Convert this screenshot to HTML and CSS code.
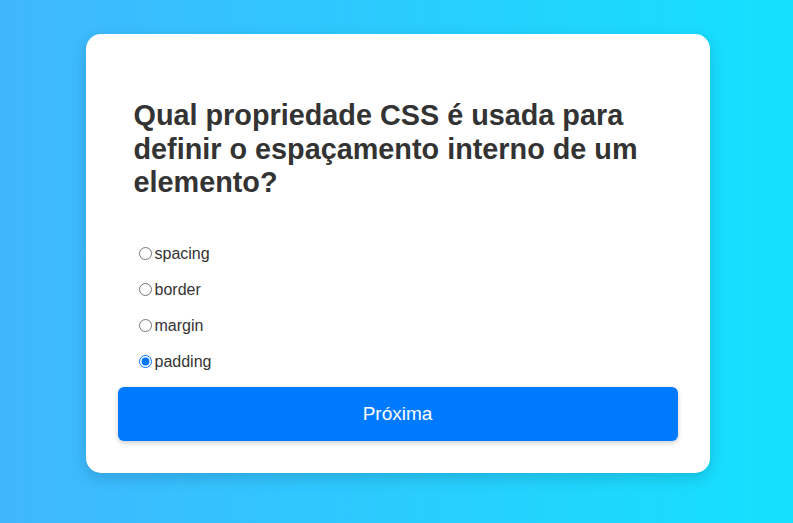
FILE: index.html
```html
<!DOCTYPE html>
<html lang="pt">
<head>
<meta charset="utf-8">
<title>Quiz</title>
<link rel="stylesheet" href="styles.css">
</head>
<body>
<div class="card">
  <div class="question">
    <h2 class="title">Qual propriedade CSS é usada para definir o espaçamento interno de um elemento?</h2>
    <ul class="options">
      <li class="option"><label><input type="radio" name="q"><span>spacing</span></label></li>
      <li class="option"><label><input type="radio" name="q"><span>border</span></label></li>
      <li class="option"><label><input type="radio" name="q"><span>margin</span></label></li>
      <li class="option"><label><input type="radio" name="q" checked><span>padding</span></label></li>
    </ul>
  </div>
  <button class="next">Próxima</button>
</div>
</body>
</html>
```
FILE: styles.css
```css
html, body {
  margin: 0;
  height: 100%;
}
body {
  background: linear-gradient(to right, #41b6fe, #14e1fe);
  font-family: "Liberation Sans", Arial, sans-serif;
  display: flex;
  justify-content: center;
  align-items: flex-start;
  padding: 34px 0 0 2px;
  box-sizing: border-box;
}
.card {
  background: #fff;
  width: 624px;
  box-sizing: border-box;
  padding: 32px;
  border-radius: 15px;
  box-shadow: 0 5px 15px rgba(0,0,0,0.15);
}
.question {
  padding: 0 16px;
}
.title {
  font-size: 28.8px;
  line-height: 33.5px;
  color: #333;
  margin: 33px 0 45px;
}
.options {
  list-style: none;
  margin: 0;
  padding: 0;
}
.option {
  height: 36px;
  font-size: 16px;
  color: #333;
}
.option label {
  display: flex;
  align-items: center;
}
.option input {
  margin: 0 3px 0 5px;
  width: 13px;
  height: 13px;
}
.next {
  display: block;
  width: 100%;
  height: 54px;
  margin-top: -2px;
  background: #007bff;
  color: #fff;
  border: none;
  border-radius: 6px;
  font-family: "Liberation Sans", Arial, sans-serif;
  font-size: 19px;
  box-shadow: 0 2px 5px rgba(0,0,0,0.2);
}
```
